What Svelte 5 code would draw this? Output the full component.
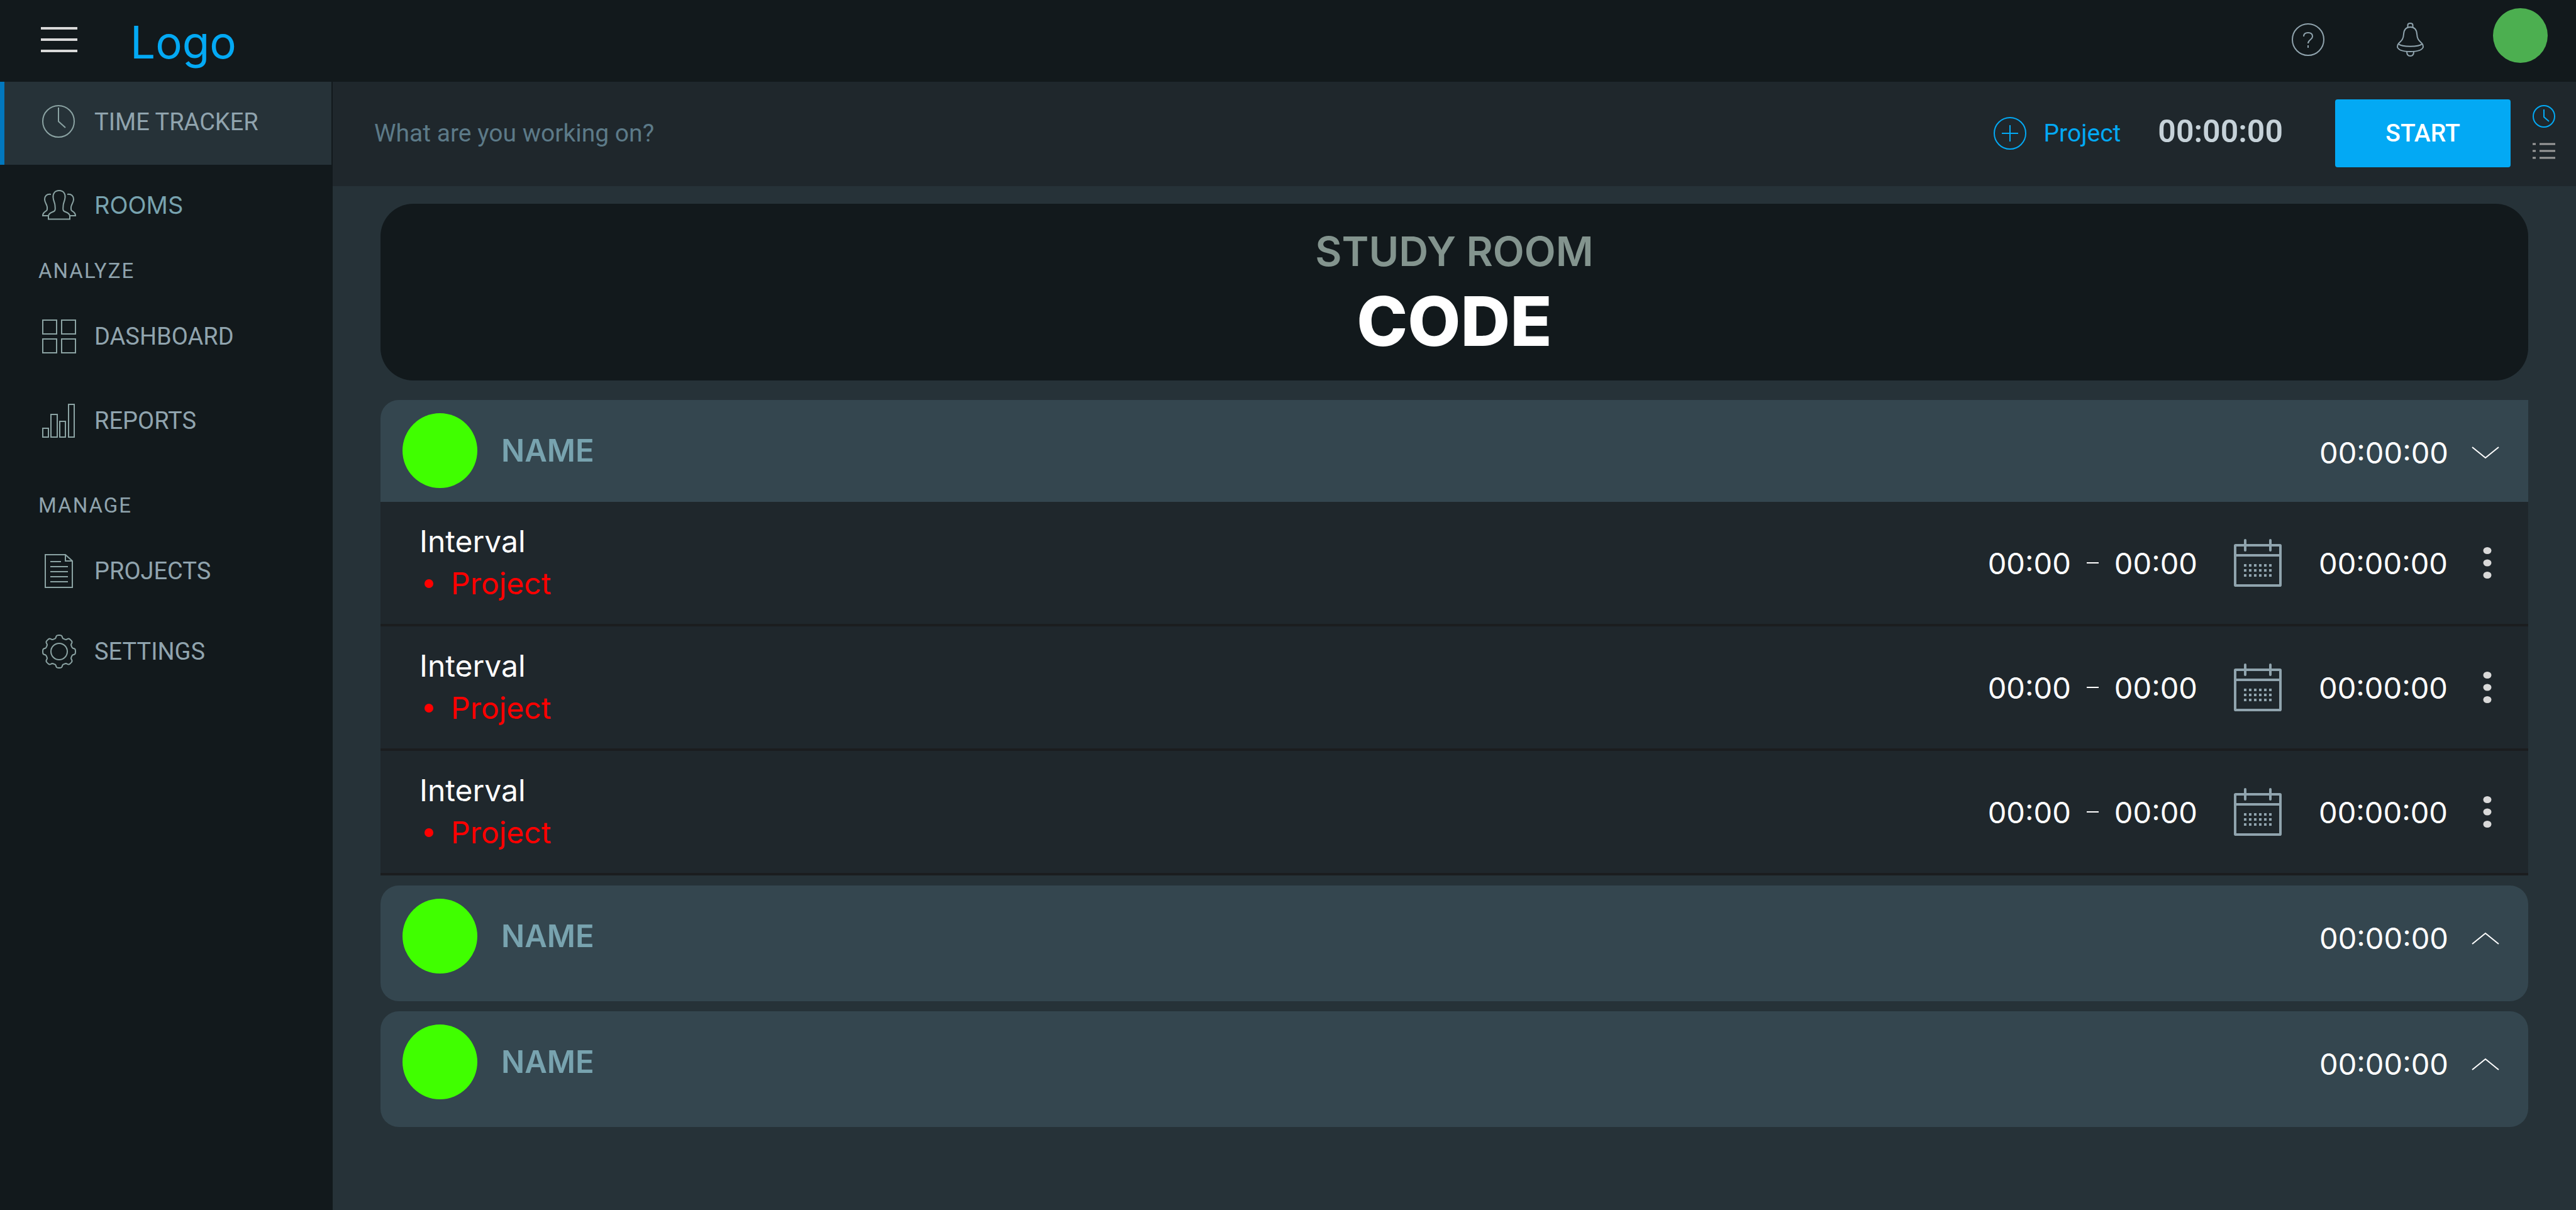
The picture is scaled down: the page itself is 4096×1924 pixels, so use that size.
<script>
  const groups = [
    { title: null, items: [
      { label: 'TIME TRACKER', icon: 'clock', active: true },
      { label: 'ROOMS', icon: 'people', plain: true }
    ] },
    { title: 'ANALYZE', items: [
      { label: 'DASHBOARD', icon: 'grid' },
      { label: 'REPORTS', icon: 'bars' }
    ] },
    { title: 'MANAGE', items: [
      { label: 'PROJECTS', icon: 'file' },
      { label: 'SETTINGS', icon: 'gear' }
    ] }
  ];

  let members = $state([
    { name: 'NAME', total: '00:00:00', open: true },
    { name: 'NAME', total: '00:00:00', open: false },
    { name: 'NAME', total: '00:00:00', open: false }
  ]);

  const intervals = [1, 2, 3].map((id) => ({
    id, title: 'Interval', project: 'Project', from: '00:00', to: '00:00', length: '00:00:00'
  }));

  // Outline of a cog with eight rounded teeth around (27, 27).
  const gear = 'M' + Array.from({ length: 160 }, (_, i) => {
    const a = (i / 160) * Math.PI * 2;
    const r = 23.7 + 2.3 * Math.tanh(2.4 * (Math.cos(8 * a) + 0.1));
    return `${(27 + r * Math.cos(a)).toFixed(2)} ${(27 + r * Math.sin(a)).toFixed(2)}`;
  }).join('L') + 'Z';

  const dotColumns = [4, 6, 8, 10, 12, 14];
  const dotRows = [10, 12, 14];
</script>

{#snippet navIcon(name)}
  {#if name === 'clock'}
    <svg class="icon" width="54" height="54" viewBox="0 0 54 54" aria-hidden="true">
      <circle cx="26" cy="26" r="25" /><path d="M26 4V26L37 36" />
    </svg>
  {:else if name === 'people'}
    <svg class="icon" width="54" height="48" viewBox="0 0 54 48" aria-hidden="true">
      <path d="M27 1C20 1 17 6 17.5 12C18 18 20.500 21 20.500 25C20.500 29 22 32 19 34C15 36 11 36 10 41V46.500H44V41C43 36 39 36 35 34C32 32 33.500 29 33.500 25C33.500 21 36 18 36.500 12C37 6 34 1 27 1Z" />
      <path d="M14 7C7 6 4 10 4 15C4 20 7.500 23 8 27C8 30 8.500 32 7 33C4 35 1 36 1 41H9" />
      <path d="M40 7C47 6 50 10 50 15C50 20 46.500 23 46 27C46 30 45.500 32 47 33C50 35 53 36 53 41H45" />
    </svg>
  {:else if name === 'grid'}
    <svg class="icon" width="54" height="54" viewBox="0 0 54 54" aria-hidden="true">
      <path d="M1 1H23V23H1ZM31 1H53V23H31ZM1 31H23V53H1ZM31 31H53V53H31Z" />
    </svg>
  {:else if name === 'bars'}
    <svg class="icon" width="54" height="54" viewBox="0 0 54 54" aria-hidden="true">
      <path d="M1 39H10V53H1ZM14 17H24V53H14ZM28 28H37V53H28ZM42 1H51V53H42Z" />
    </svg>
  {:else if name === 'file'}
    <svg class="icon" width="54" height="54" viewBox="0 0 54 54" aria-hidden="true">
      <path d="M5 1H37L48 11V53H5ZM37 1V11H48M13 12H30M13 20H41M13 28H41M13 36H41M13 44H41" />
    </svg>
  {:else}
    <svg class="icon" width="54" height="54" viewBox="0 0 54 54" aria-hidden="true">
      <path d={gear} /><circle cx="27" cy="27" r="13" />
    </svg>
  {/if}
{/snippet}

<div class="app">
  <header class="topbar">
    <button class="burger" aria-label="Toggle menu"><span></span><span></span><span></span></button>
    <a class="logo" href="#home">Logo</a>
    <div class="tools">
      <button aria-label="Help">
        <svg class="icon" width="52" height="52" viewBox="0 0 52 52">
          <circle cx="26" cy="26" r="25" />
          <path d="M19 21C19 17 22 15 26 15C30 15 33 17 33 21C33 26 26 26 26 32M26 35V39" />
        </svg>
      </button>
      <button class="bell" aria-label="Notifications">
        <svg class="icon" width="43" height="54" viewBox="0 0 43 54">
          <path d="M17.500 8V4C17.500 0 25.500 0 25.500 4V8" />
          <path d="M21.500 7C14 7 11.500 12 11 18C10.500 27 7 29 3 33C1 35 1 37 1 39C3 44 12 46 21.500 46C31 46 40 44 42 39C42 37 42 35 40 33C36 29 32.500 27 32 18C31.500 12 29 7 21.500 7Z" />
          <path d="M3 34C8 39 35 39 40 34M16 46C16 50 17 53 21.500 53C26 53 27 50 27 46" />
        </svg>
      </button>
      <button class="me" aria-label="Account"></button>
    </div>
  </header>

  <nav class="sidebar" aria-label="Main">
    {#each groups as group}
      {#if group.title}<h2>{group.title}</h2>{/if}
      <ul class:spaced={group.title === 'ANALYZE'}>
        {#each group.items as item}
          <li>
            <a href="#{item.icon}" class:active={item.active} class:plain={item.plain}>
              {@render navIcon(item.icon)}
              <span>{item.label}</span>
            </a>
          </li>
        {/each}
      </ul>
    {/each}
  </nav>

  <main>
    <form class="tracker" onsubmit={(e) => e.preventDefault()}>
      <input type="text" placeholder="What are you working on?" aria-label="What are you working on?" />
      <button type="button" class="project">
        <svg class="icon" width="54" height="54" viewBox="0 0 54 54" aria-hidden="true">
          <circle cx="27" cy="27" r="25" /><path d="M14 27H40M27 14V40" />
        </svg>
        Project
      </button>
      <time class="timer">00:00:00</time>
      <button class="start">START</button>
      <div class="modes">
        <button type="button" class="mode on" aria-label="Timer mode">
          <svg class="icon" width="36" height="38" viewBox="0 0 36 38">
            <circle cx="18" cy="19" r="17" /><path d="M18 8V20L26 27" />
          </svg>
        </button>
        <button type="button" class="mode" aria-label="Manual mode">
          <svg class="icon" width="36" height="28" viewBox="0 0 36 28">
            <path d="M0 3H5M11 3H36M0 14H5M11 14H36M0 25H5M11 25H36" />
          </svg>
        </button>
      </div>
    </form>

    <div class="content">
      <section class="room">
        <h1>STUDY ROOM</h1>
        <p>CODE</p>
      </section>

      <div class="members">
        {#each members as member}
          <section>
            <header class="member" class:open={member.open}>
              <span class="avatar"></span>
              <h3>{member.name}</h3>
              <div class="total">
                <time>{member.total}</time>
                <button aria-label="Toggle intervals" aria-expanded={member.open} onclick={() => (member.open = !member.open)}>
                  <svg width="44" height="22" viewBox="0 0 44 22">
                    <path d={member.open ? 'M1 2L22 19L43 2' : 'M1 20L22 3L43 20'} />
                  </svg>
                </button>
              </div>
            </header>
            {#if member.open}
              <ul class="intervals">
                {#each intervals as row (row.id)}
                  <li>
                    <div class="what">
                      <span>{row.title}</span>
                      <span class="tag"><i></i>{row.project}</span>
                    </div>
                    <div class="range"><time>{row.from}</time><i></i><time>{row.to}</time></div>
                    <button class="calendar" aria-label="Pick date">
                      <svg width="76" height="76" viewBox="0 0 19 19">
                        <rect class="frame" x="0.5" y="2.5" width="18" height="16" rx="0.2" />
                        <path class="frame" d="M0.500 6.500H18.500" />
                        <path class="frame ring" d="M4.500 0.500V4.500M14.500 0.500V4.500" />
                        {#each dotRows as y}
                          {#each dotColumns as x}<rect {x} {y} width="1" height="1" />{/each}
                        {/each}
                      </svg>
                    </button>
                    <time>{row.length}</time>
                    <button class="more" aria-label="More actions">
                      <svg width="14" height="50" viewBox="0 0 14 50">
                        <ellipse cx="7" cy="5.500" rx="6.500" ry="5.500" />
                        <ellipse cx="7" cy="25" rx="6.500" ry="5.500" />
                        <ellipse cx="7" cy="44.500" rx="6.500" ry="5.500" />
                      </svg>
                    </button>
                  </li>
                {/each}
              </ul>
            {/if}
          </section>
        {/each}
      </div>
    </div>
  </main>
</div>

<style>
  :global(body) {
    margin: 0;
    background: #263238;
  }
  .app {
    display: grid;
    grid-template-columns: 529px minmax(0, 1fr);
    grid-template-rows: 130px 1fr;
    min-height: 100vh;
    font-family: Inter, 'Liberation Sans', sans-serif;
    font-size: 48px;
    color: #fff;
  }
  button {
    display: flex;
    align-items: center;
    justify-content: center;
    padding: 0;
    border: 0;
    background: none;
    color: inherit;
    font: inherit;
    cursor: pointer;
  }
  a {
    color: inherit;
    text-decoration: none;
  }
  ul {
    display: flex;
    flex-direction: column;
    margin: 0;
    padding: 0;
    list-style: none;
  }
  h1, h2, h3, p {
    margin: 0;
  }
  svg {
    display: block;
    flex: none;
  }
  .icon {
    fill: none;
    stroke: currentColor;
    stroke-width: 2;
  }

  .topbar {
    grid-column: 1 / -1;
    display: flex;
    align-items: center;
    box-sizing: border-box;
    padding: 0 45px 4px 65px;
    background: #12191c;
  }
  .burger {
    flex-direction: column;
    gap: 14px;
    width: 58px;
  }
  .burger span {
    width: 100%;
    height: 4px;
    background: #d9d9d9;
  }
  .logo {
    margin-left: 84px;
    padding-top: 8px;
    color: #03a9f4;
    font-size: 71px;
    line-height: 84px;
  }
  .tools {
    display: flex;
    align-items: center;
    margin-left: auto;
    color: #90a4ae;
  }
  .bell {
    margin: 0 110px 0 115px;
  }
  .me {
    width: 87px;
    height: 87px;
    margin-bottom: 14px;
    border-radius: 50%;
    background: #4caf50;
  }

  .sidebar {
    padding-right: 2px;
    background: #12191c;
    color: #90a4ae;
    font-family: Roboto, 'Liberation Sans', sans-serif;
    font-size: 38px;
  }
  .sidebar a {
    display: flex;
    align-items: center;
    gap: 29px;
    box-sizing: border-box;
    height: 128px;
    padding-left: 67px;
  }
  .sidebar .icon {
    color: #8ba3a3;
  }
  .sidebar a.active {
    height: 132px;
    padding-bottom: 5px;
    padding-left: 60px;
    border-left: 7px solid #0277bd;
    background: #263238;
  }
  .sidebar a.plain {
    color: #78a3af;
    font-family: Inter, 'Liberation Sans', sans-serif;
  }
  .sidebar h2 {
    padding: 0 61px;
    font-size: 33px;
    font-weight: 400;
    letter-spacing: 2px;
    line-height: 81px;
  }
  .spaced {
    gap: 6px;
    padding-bottom: 30px;
  }

  .tracker {
    display: flex;
    align-items: center;
    box-sizing: border-box;
    height: 166px;
    padding: 0 33px 3px 66px;
    background: #1f272c;
    font-family: Roboto, 'Liberation Sans', sans-serif;
    font-size: 39px;
  }
  .tracker input {
    flex: 1;
    min-width: 0;
    height: 80px;
    padding: 0;
    border: 0;
    outline: 0;
    background: none;
    color: #fff;
    font: inherit;
  }
  .tracker input::placeholder {
    color: #5c7a88;
    opacity: 1;
  }
  .project {
    gap: 26px;
    color: #03a9f4;
  }
  .timer {
    margin: 0 83px 0 59px;
    padding-bottom: 6px;
    color: #c6d2d9;
    font-size: 50px;
    font-weight: 600;
  }
  .start {
    width: 279px;
    height: 108px;
    border-radius: 4px;
    background: #03a9f4;
    font-weight: 500;
  }
  .modes {
    display: flex;
    flex-direction: column;
    gap: 22px;
    margin-left: 35px;
    padding-bottom: 4px;
  }
  .mode {
    color: #9a9a9a;
  }
  .mode .icon {
    stroke-width: 3;
  }
  .mode.on {
    color: #03a9f4;
  }
  .mode.on .icon {
    stroke-width: 2;
  }

  .content {
    display: flex;
    flex-direction: column;
    gap: 31px;
    padding: 28px 76px;
  }
  .room {
    padding: 36px 0 25px;
    border-radius: 52px;
    background: #12191c;
    text-align: center;
  }
  .room h1 {
    color: #83948e;
    font-size: 65px;
    font-weight: 600;
    line-height: 80px;
  }
  .room p {
    font-size: 109px;
    font-weight: 800;
    line-height: 140px;
  }
  .members {
    display: flex;
    flex-direction: column;
    gap: 16px;
  }
  .member {
    display: flex;
    align-items: center;
    padding: 21px 46px 44px 35px;
    border-radius: 29px;
    background: #34464f;
  }
  .member.open {
    padding-bottom: 22px;
    border-radius: 29px 0 0 0;
  }
  .avatar {
    width: 119px;
    height: 119px;
    border-radius: 50%;
    background: #40ff00;
  }
  .member h3 {
    margin-left: 38px;
    color: #78a3af;
    font-size: 49px;
    font-weight: 600;
  }
  .members time {
    font-size: 47px;
  }
  .total {
    display: flex;
    align-items: center;
    gap: 37px;
    margin-left: auto;
    padding-top: 6px;
  }
  .total svg {
    fill: none;
    stroke: #fff;
    stroke-width: 2;
  }
  .intervals li {
    display: flex;
    align-items: center;
    height: 194px;
    padding: 0 58px 0 62px;
    border-bottom: 4px solid #1b1d1f;
    background: #1f272c;
  }
  .what {
    display: flex;
    flex-direction: column;
    margin-right: auto;
    padding-bottom: 2px;
    line-height: 67px;
  }
  .tag {
    display: flex;
    align-items: center;
    gap: 28px;
    padding-left: 8px;
    color: #f00;
  }
  .tag i {
    width: 14px;
    height: 14px;
    border-radius: 50%;
    background: #f00;
  }
  .range {
    display: flex;
    align-items: center;
    gap: 25px;
  }
  .range i {
    width: 19px;
    height: 2px;
    background: #fff;
  }
  .calendar {
    margin: 0 59px 0 58px;
    color: #90a4ae;
  }
  .calendar svg {
    fill: currentColor;
  }
  .calendar .frame {
    fill: none;
    stroke: currentColor;
    stroke-width: 1;
  }
  .calendar .ring {
    stroke-linecap: round;
  }
  .more {
    margin-left: 56px;
    color: #d9d9d9;
  }
  .more svg {
    fill: currentColor;
  }
</style>
